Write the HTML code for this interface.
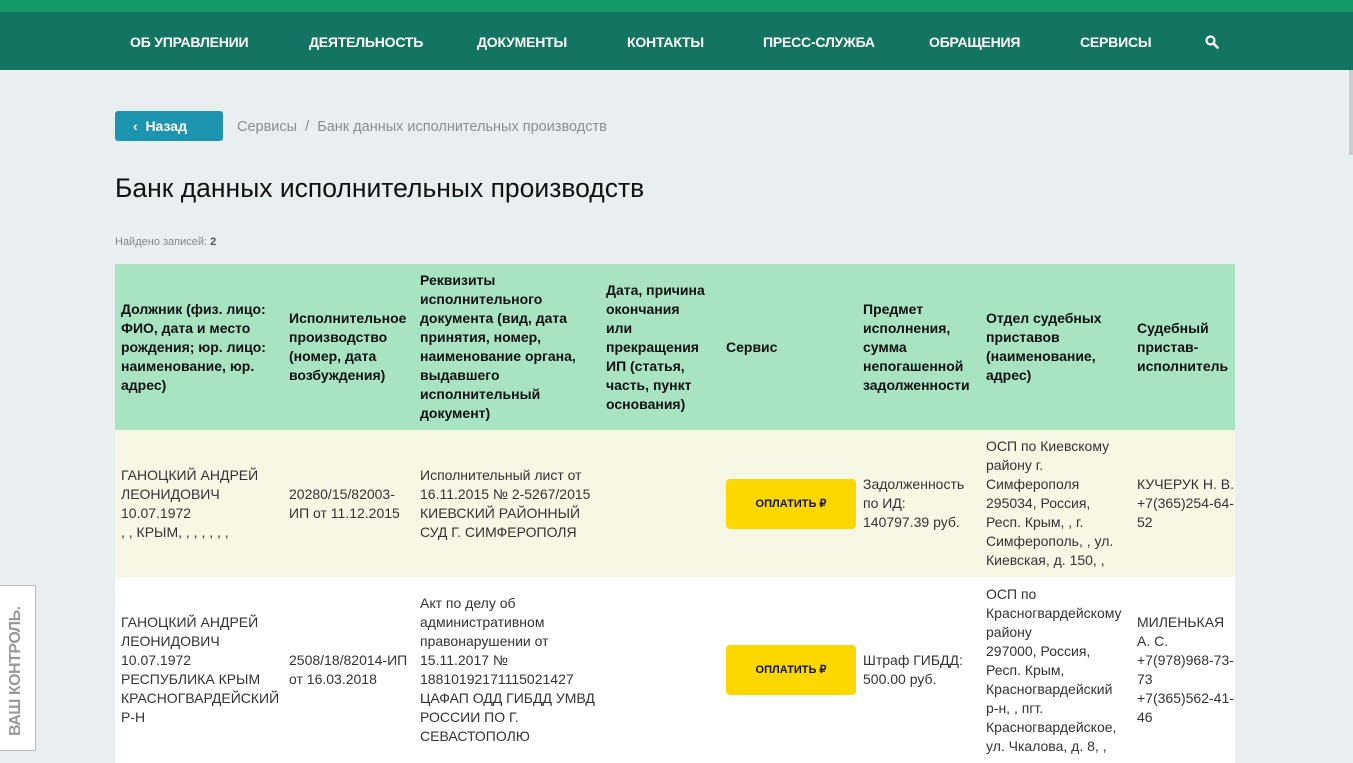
<!DOCTYPE html>
<html><head><meta charset="utf-8"><style>
body{margin:0;width:1353px;height:763px;overflow:hidden;background:#e9eef0;font-family:"Liberation Sans",sans-serif;position:relative}
.top{position:absolute;left:0;top:0;width:1353px;height:12px;background:#14996a}
.nav{position:absolute;left:0;top:12px;width:1353px;height:58px;background:#137462}
.nav span{position:absolute;top:22px;color:#fff;font-weight:bold;font-size:14px;letter-spacing:-0.2px}
.back{position:absolute;left:115px;top:111px;width:108px;height:30px;background:#1e95b0;border-radius:3px;color:#fff;font-weight:bold;font-size:14px;line-height:30px;box-sizing:border-box;padding-left:18px}
.bc{position:absolute;left:237px;top:119px;font-size:14.5px;color:#8a8f92}
h1{position:absolute;left:115px;top:173px;margin:0;font-weight:normal;font-size:26.5px;color:#111}
.found{position:absolute;left:115px;top:236px;font-size:11px;color:#888}
table{position:absolute;left:115px;top:264px;width:1120px;border-collapse:collapse;table-layout:fixed;font-size:14px;line-height:19px;color:#333}
td{vertical-align:middle;padding:0 0 0 6px;overflow:hidden;white-space:nowrap}
tr.h{background:#a8e4c1;height:166px;font-weight:bold;color:#111}
tr.r1{background:#f7f7e5;height:147px}
tr.r2{background:#fff;height:186px}
.pay{width:130px;height:50px;background:#fdd800;border-radius:4px;font-size:11px;font-weight:bold;color:#111;text-align:center;line-height:50px}
.vk{position:absolute;left:0;top:585px;width:36px;height:166px;border:1px solid #bbb;border-left:none;background:#fff;box-sizing:border-box}
.vk span{position:absolute;left:7px;top:150px;transform:rotate(-90deg);transform-origin:0 0;font-weight:bold;font-size:16px;color:#999;white-space:nowrap;letter-spacing:-0.5px}
.sb{position:absolute;left:1349px;top:70px;width:4px;height:85px;background:#ccc}
</style></head><body>
<div class="top"></div>
<div class="nav">
<span style="left:130px">ОБ УПРАВЛЕНИИ</span>
<span style="left:309px">ДЕЯТЕЛЬНОСТЬ</span>
<span style="left:477px">ДОКУМЕНТЫ</span>
<span style="left:627px">КОНТАКТЫ</span>
<span style="left:763px">ПРЕСС-СЛУЖБА</span>
<span style="left:929px">ОБРАЩЕНИЯ</span>
<span style="left:1080px">СЕРВИСЫ</span>
<svg style="position:absolute;left:1205px;top:23px" width="14" height="14" viewBox="0 0 14 14"><circle cx="5.5" cy="5.5" r="4" fill="none" stroke="#fff" stroke-width="2.2"/><path d="M8.5 8.5L12.5 12.5" stroke="#fff" stroke-width="2.6" stroke-linecap="round"/></svg>
</div>
<div class="sb"></div>
<div class="back">‹&nbsp; Назад</div>
<div class="bc">Сервисы &nbsp;/&nbsp; Банк данных исполнительных производств</div>
<h1>Банк данных исполнительных производств</h1>
<div class="found">Найдено записей: <b style="color:#555">2</b></div>
<table>
<colgroup><col style="width:168px"><col style="width:131px"><col style="width:186px"><col style="width:120px"><col style="width:137px"><col style="width:123px"><col style="width:151px"><col style="width:104px"></colgroup>
<tr class="h"><td>Должник (физ. лицо:<br>ФИО, дата и место<br>рождения; юр. лицо:<br>наименование, юр.<br>адрес)</td><td>Исполнительное<br>производство<br>(номер, дата<br>возбуждения)</td><td>Реквизиты<br>исполнительного<br>документа (вид, дата<br>принятия, номер,<br>наименование органа,<br>выдавшего<br>исполнительный<br>документ)</td><td>Дата, причина<br>окончания<br>или<br>прекращения<br>ИП (статья,<br>часть, пункт<br>основания)</td><td>Сервис</td><td>Предмет<br>исполнения,<br>сумма<br>непогашенной<br>задолженности</td><td>Отдел судебных<br>приставов<br>(наименование,<br>адрес)</td><td>Судебный<br>пристав-<br>исполнитель</td></tr>
<tr class="r1"><td>ГАНОЦКИЙ АНДРЕЙ<br>ЛЕОНИДОВИЧ<br>10.07.1972<br>, , КРЫМ, , , , , , ,</td><td>20280/15/82003-<br>ИП от 11.12.2015</td><td>Исполнительный лист от<br>16.11.2015 № 2-5267/2015<br>КИЕВСКИЙ РАЙОННЫЙ<br>СУД Г. СИМФЕРОПОЛЯ</td><td></td><td><div class="pay">ОПЛАТИТЬ ₽</div></td><td>Задолженность<br>по ИД:<br>140797.39 руб.</td><td>ОСП по Киевскому<br>району г.<br>Симферополя<br>295034, Россия,<br>Респ. Крым, , г.<br>Симферополь, , ул.<br>Киевская, д. 150, ,</td><td>КУЧЕРУК Н. В.<br>+7(365)254-64-<br>52</td></tr>
<tr class="r2"><td>ГАНОЦКИЙ АНДРЕЙ<br>ЛЕОНИДОВИЧ<br>10.07.1972<br>РЕСПУБЛИКА КРЫМ<br>КРАСНОГВАРДЕЙСКИЙ<br>Р-Н</td><td>2508/18/82014-ИП<br>от 16.03.2018</td><td>Акт по делу об<br>административном<br>правонарушении от<br>15.11.2017 №<br>18810192171115021427<br>ЦАФАП ОДД ГИБДД УМВД<br>РОССИИ ПО Г.<br>СЕВАСТОПОЛЮ</td><td></td><td><div class="pay">ОПЛАТИТЬ ₽</div></td><td>Штраф ГИБДД:<br>500.00 руб.</td><td>ОСП по<br>Красногвардейскому<br>району<br>297000, Россия,<br>Респ. Крым,<br>Красногвардейский<br>р-н, , пгт.<br>Красногвардейское,<br>ул. Чкалова, д. 8, ,</td><td>МИЛЕНЬКАЯ<br>А. С.<br>+7(978)968-73-<br>73<br>+7(365)562-41-<br>46</td></tr>
</table>
<div class="vk"><span>ВАШ КОНТРОЛЬ.</span></div>
</body></html>
